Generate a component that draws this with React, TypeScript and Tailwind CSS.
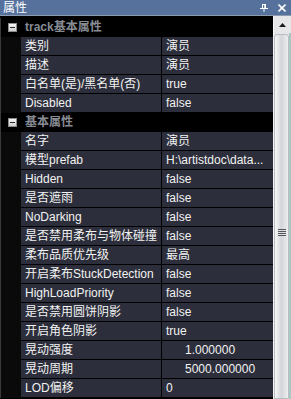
import React from 'react';

type Prop = { name: string; value: string; indent?: boolean };
type Group = { title: string; props: Prop[] };

const groups: Group[] = [
  {
    title: 'track基本属性',
    props: [
      { name: '类别', value: '演员' },
      { name: '描述', value: '演员' },
      { name: '白名单(是)/黑名单(否)', value: 'true' },
      { name: 'Disabled', value: 'false' },
    ],
  },
  {
    title: '基本属性',
    props: [
      { name: '名字', value: '演员' },
      { name: '模型prefab', value: 'H:\\artistdoc\\data...' },
      { name: 'Hidden', value: 'false' },
      { name: '是否遮雨', value: 'false' },
      { name: 'NoDarking', value: 'false' },
      { name: '是否禁用柔布与物体碰撞', value: 'false' },
      { name: '柔布品质优先级', value: '最高' },
      { name: '开启柔布StuckDetection', value: 'false' },
      { name: 'HighLoadPriority', value: 'false' },
      { name: '是否禁用圆饼阴影', value: 'false' },
      { name: '开启角色阴影', value: 'true' },
      { name: '晃动强度', value: '1.000000', indent: true },
      { name: '晃动周期', value: '5000.000000', indent: true },
      { name: 'LOD偏移', value: '0' },
    ],
  },
];

const MinusBox: React.FC = () => (
  <div className="w-[9px] h-[9px] border border-[#8c8c8c] bg-gradient-to-b from-[#f4f4f4] to-[#cfcfcf] flex items-center justify-center">
    <div className="w-[5px] h-px bg-[#2a2a2a]" />
  </div>
);

const CategoryRow: React.FC<{ title: string }> = ({ title }) => (
  <div className="h-[19px] flex bg-black shrink-0">
    <div className="w-[21px] flex items-center pl-[7px] border-l border-[#3a3a3a]">
      <MinusBox />
    </div>
    <div className="flex items-center pl-[4px] pb-px text-[12px] font-bold text-[#878b94] leading-none whitespace-nowrap">
      {title}
    </div>
  </div>
);

const PropRow: React.FC<{ prop: Prop }> = ({ prop }) => (
  <div className="h-[19px] flex shrink-0 bg-black">
    <div className="w-[21px] bg-[#0a0a0a] border-l border-[#3a3a3a]" />
    <div className="w-[140px] h-[18px] bg-[#2c2e3b] flex items-center pl-[4px] overflow-hidden whitespace-nowrap text-[12px] leading-none text-[#f2f2f2]">
      {prop.name}
    </div>
    <div className="w-px" />
    <div
      className={`w-[111px] h-[18px] bg-[#2c2e3b] flex items-center overflow-hidden whitespace-nowrap text-[12px] leading-none text-[#f2f2f2] ${
        prop.indent ? 'pl-[23px]' : 'pl-[4px]'
      }`}
    >
      {prop.value}
    </div>
  </div>
);

const ScrollBar: React.FC = () => (
  <div className="w-[18px] flex flex-col bg-[#e6e6e8] border-l border-[#f4f4f4]">
    <div className="h-[17px] flex items-center justify-center shrink-0">
      <svg width="7" height="4" viewBox="0 0 7 4">
        <polygon points="3.5,0 7,4 0,4" fill="#1a1a1a" />
      </svg>
    </div>
    <div className="flex flex-1 min-h-0">
      <div className="w-[15px] mt-[1px] rounded-t-[3px] border border-[#b9bcc4] bg-gradient-to-r from-[#f7f7f7] via-[#d4d5da] to-[#eeeeef] flex flex-col items-center pt-[194px]">
        <div className="flex flex-col gap-[1px] items-center">
          <div className="w-[8px] h-px bg-[#55585f]" />
          <div className="w-[8px] h-px bg-[#55585f]" />
          <div className="w-[8px] h-px bg-[#55585f]" />
          <div className="w-[8px] h-px bg-[#55585f]" />
        </div>
      </div>
      <div className="w-[2px] bg-[#a7c9c2]" />
    </div>
  </div>
);

export default function App() {
  return (
    <div className="w-[291px] h-[399px] overflow-hidden bg-black flex flex-col font-[Liberation_Sans,Noto_Sans_CJK_SC,sans-serif]">
      <div className="h-[15px] bg-[#55719c] flex items-center justify-between pl-[3px] pr-[5px] shrink-0">
        <span className="text-[12px] leading-none text-white">属性</span>
        <div className="flex items-center gap-[10px]">
          <svg width="8" height="8" viewBox="0 0 8 8" fill="none" stroke="white" strokeWidth="1">
            <rect x="2.5" y="0.5" width="3" height="4" />
            <line x1="5" y1="0.5" x2="5" y2="4.5" strokeWidth="1.5" />
            <line x1="0" y1="4.5" x2="8" y2="4.5" />
            <line x1="4" y1="4.5" x2="4" y2="8" />
          </svg>
          <svg width="8" height="8" viewBox="0 0 8 8" stroke="white" strokeWidth="1.6">
            <line x1="0.5" y1="0.5" x2="7.5" y2="7.5" />
            <line x1="7.5" y1="0.5" x2="0.5" y2="7.5" />
          </svg>
        </div>
      </div>
      <div className="h-px bg-[#8d9bb0] shrink-0" />
      <div className="flex flex-1 min-h-0">
        <div className="w-[273px] flex flex-col pt-[2px]">
          {groups.map((g) => (
            <React.Fragment key={g.title}>
              <CategoryRow title={g.title} />
              {g.props.map((p) => (
                <PropRow key={p.name} prop={p} />
              ))}
            </React.Fragment>
          ))}
        </div>
        <ScrollBar />
      </div>
    </div>
  );
}
